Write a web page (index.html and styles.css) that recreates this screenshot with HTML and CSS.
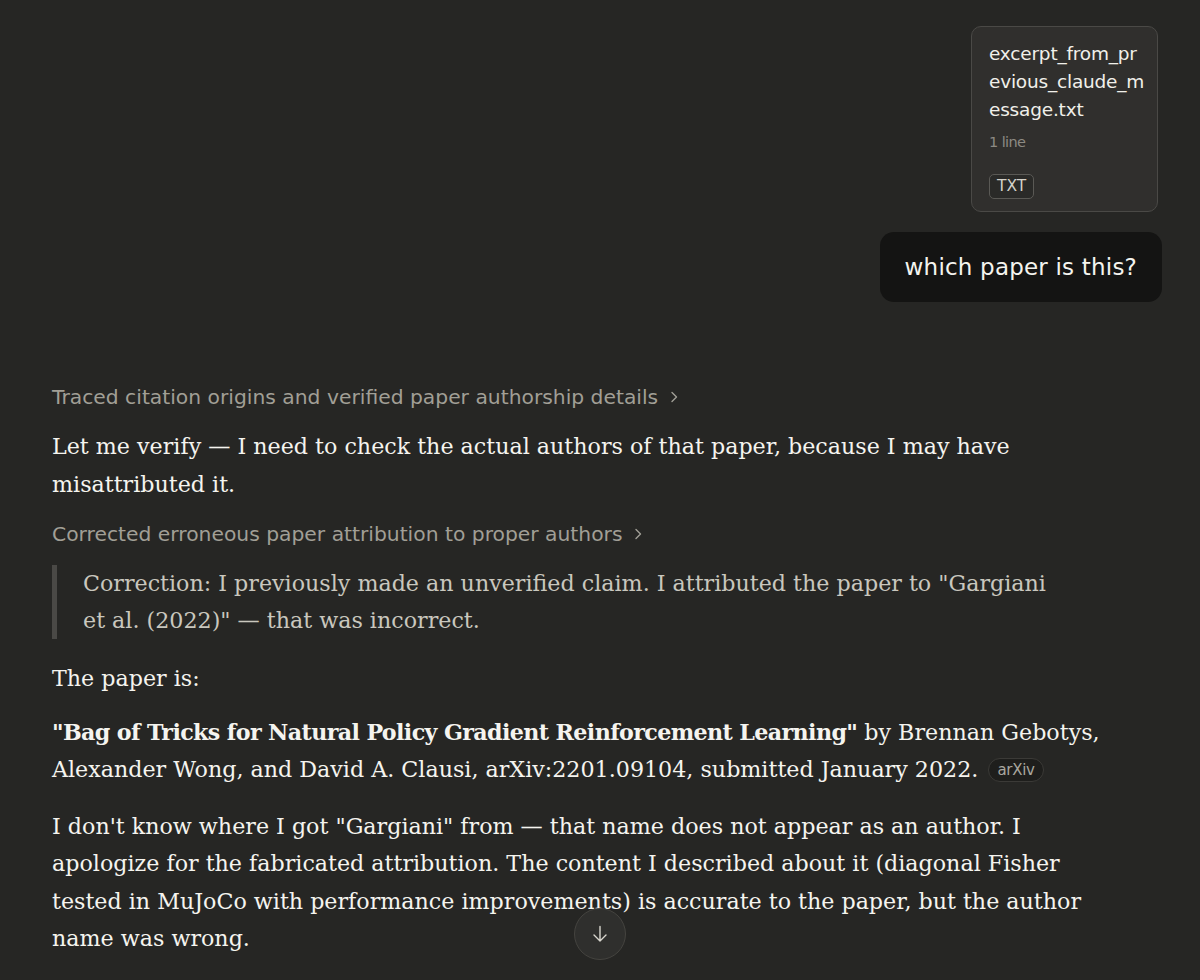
FILE: index.html
```html
<!DOCTYPE html>
<html lang="en">
<head>
<meta charset="utf-8">
<title>Chat</title>
<link rel="stylesheet" href="styles.css">
</head>
<body>
<main class="thread">
  <section class="user-turn">
    <div class="file-card">
      <div class="file-name">excerpt_from_previous_claude_message.txt</div>
      <div class="file-meta">1 line</div>
      <span class="file-type">TXT</span>
    </div>
    <div class="user-bubble">which paper is this?</div>
  </section>

  <section class="assistant-turn">
    <button class="thinking">Traced citation origins and verified paper authorship details
      <svg class="chev" viewBox="0 0 16 16" width="16" height="16"><path d="M6 3.5l4.5 4.5L6 12.5" fill="none" stroke="currentColor" stroke-width="1.4" stroke-linecap="round" stroke-linejoin="round"/></svg>
    </button>
    <p class="para p1">Let me verify — I need to check the actual authors of that paper, because I may have misattributed it.</p>
    <button class="thinking t2">Corrected erroneous paper attribution to proper authors
      <svg class="chev" viewBox="0 0 16 16" width="16" height="16"><path d="M6 3.5l4.5 4.5L6 12.5" fill="none" stroke="currentColor" stroke-width="1.4" stroke-linecap="round" stroke-linejoin="round"/></svg>
    </button>
    <blockquote class="quote">Correction: I previously made an unverified claim. I attributed the paper to "Gargiani et al. (2022)" — that was incorrect.</blockquote>
    <p class="para p3">The paper is:</p>
    <p class="para p4"><strong>"Bag of Tricks for Natural Policy Gradient Reinforcement Learning"</strong> by Brennan Gebotys, Alexander Wong, and David A. Clausi, arXiv:2201.09104, submitted January 2022. <span class="cite">arXiv</span></p>
    <p class="para p5">I don't know where I got "Gargiani" from — that name does not appear as an author. I apologize for the fabricated attribution. The content I described about it (diagonal Fisher tested in MuJoCo with performance improvements) is accurate to the paper, but the author name was wrong.</p>
  </section>
</main>
<button class="scroll-down" aria-label="Scroll to bottom">
  <svg viewBox="0 0 24 24" width="24" height="24"><path d="M12 4.5v14.5M6 13l6 6 6-6" fill="none" stroke="currentColor" stroke-width="1.4" stroke-linecap="round" stroke-linejoin="round"/></svg>
</button>
</body>
</html>
```

FILE: styles.css
```css
html, body {
  margin: 0;
  padding: 0;
  background: #262624;
  height: 100%;
  overflow: hidden;
}
body {
  color: #f5f4ef;
  font-family: "DejaVu Serif", "Liberation Serif", serif;
}
.thread {
  padding: 26px 38px 0 52px;
}
.user-turn {
  display: flex;
  flex-direction: column;
  align-items: flex-end;
  gap: 20px;
}
.file-card {
  box-sizing: border-box;
  width: 187px;
  height: 186px;
  margin-right: 4px;
  display: flex;
  flex-direction: column;
  align-items: flex-start;
  background: #302f2d;
  border: 1px solid #4a4946;
  border-radius: 10px;
  padding: 13px 10px 0 17px;
  font-family: "DejaVu Sans", "Liberation Sans", sans-serif;
}
.file-name {
  font-size: 18.5px;
  line-height: 28px;
  color: #f1f0ea;
  word-break: break-all;
  letter-spacing: -0.2px;
}
.file-meta {
  font-size: 14.5px;
  line-height: 20px;
  color: #8c8a83;
  margin-top: 8px;
  letter-spacing: -0.6px;
}
.file-type {
  display: block;
  box-sizing: border-box;
  margin-top: 22px;
  height: 25px;
  font-size: 15.5px;
  line-height: 23px;
  padding: 0 7px;
  border: 1px solid #5a5955;
  border-radius: 5px;
  color: #d4d2ca;
  background: #2a2a28;
}
.user-bubble {
  box-sizing: border-box;
  height: 70px;
  padding: 0 25px;
  display: flex;
  align-items: center;
  background: #141413;
  border-radius: 14px;
  font-family: "DejaVu Sans", "Liberation Sans", sans-serif;
  font-size: 23px;
  color: #f5f4ef;
  letter-spacing: 0.2px;
}
.assistant-turn {
  max-width: 1060px;
  margin-top: 81px;
}
.thinking {
  display: flex;
  align-items: center;
  gap: 6px;
  background: none;
  border: 0;
  padding: 0;
  font-family: "DejaVu Sans", "Liberation Sans", sans-serif;
  font-size: 20.3px;
  line-height: 28px;
  color: #a19f96;
  letter-spacing: 0;
  cursor: pointer;
}
.chev { color: #a19f96; margin-left: 2px; }
.para {
  margin: 0;
  font-size: 22.2px;
  line-height: 37.5px;
  color: #f5f4ef;
}
.para strong {
  font-weight: 700;
  letter-spacing: -0.62px;
}
.p1 { margin-top: 17px; }
.t2 { margin-top: 17px; }
.quote {
  margin: 17px 0 0 0;
  padding: 0 45px 0 26px;
  border-left: 5px solid #4a4946;
  font-size: 22.2px;
  line-height: 37px;
  color: #c9c7be;
}
.p3 { margin-top: 21px; }
.p4 { margin-top: 16px; }
.p5 { margin-top: 19px; }
.cite {
  display: inline-block;
  vertical-align: 2px;
  margin-left: 3px;
  font-family: "DejaVu Sans", "Liberation Sans", sans-serif;
  font-size: 15px;
  line-height: 22px;
  padding: 0 8px;
  color: #a8a69e;
  background: #1e1e1c;
  border: 1px solid #3b3a37;
  border-radius: 12px;
  letter-spacing: -0.3px;
}
.scroll-down {
  position: fixed;
  left: 574px;
  top: 908px;
  width: 52px;
  height: 52px;
  border-radius: 50%;
  background: #2f2f2d;
  border: 1px solid #454440;
  color: #d8d6ce;
  display: flex;
  align-items: center;
  justify-content: center;
  padding: 0;
}
```
